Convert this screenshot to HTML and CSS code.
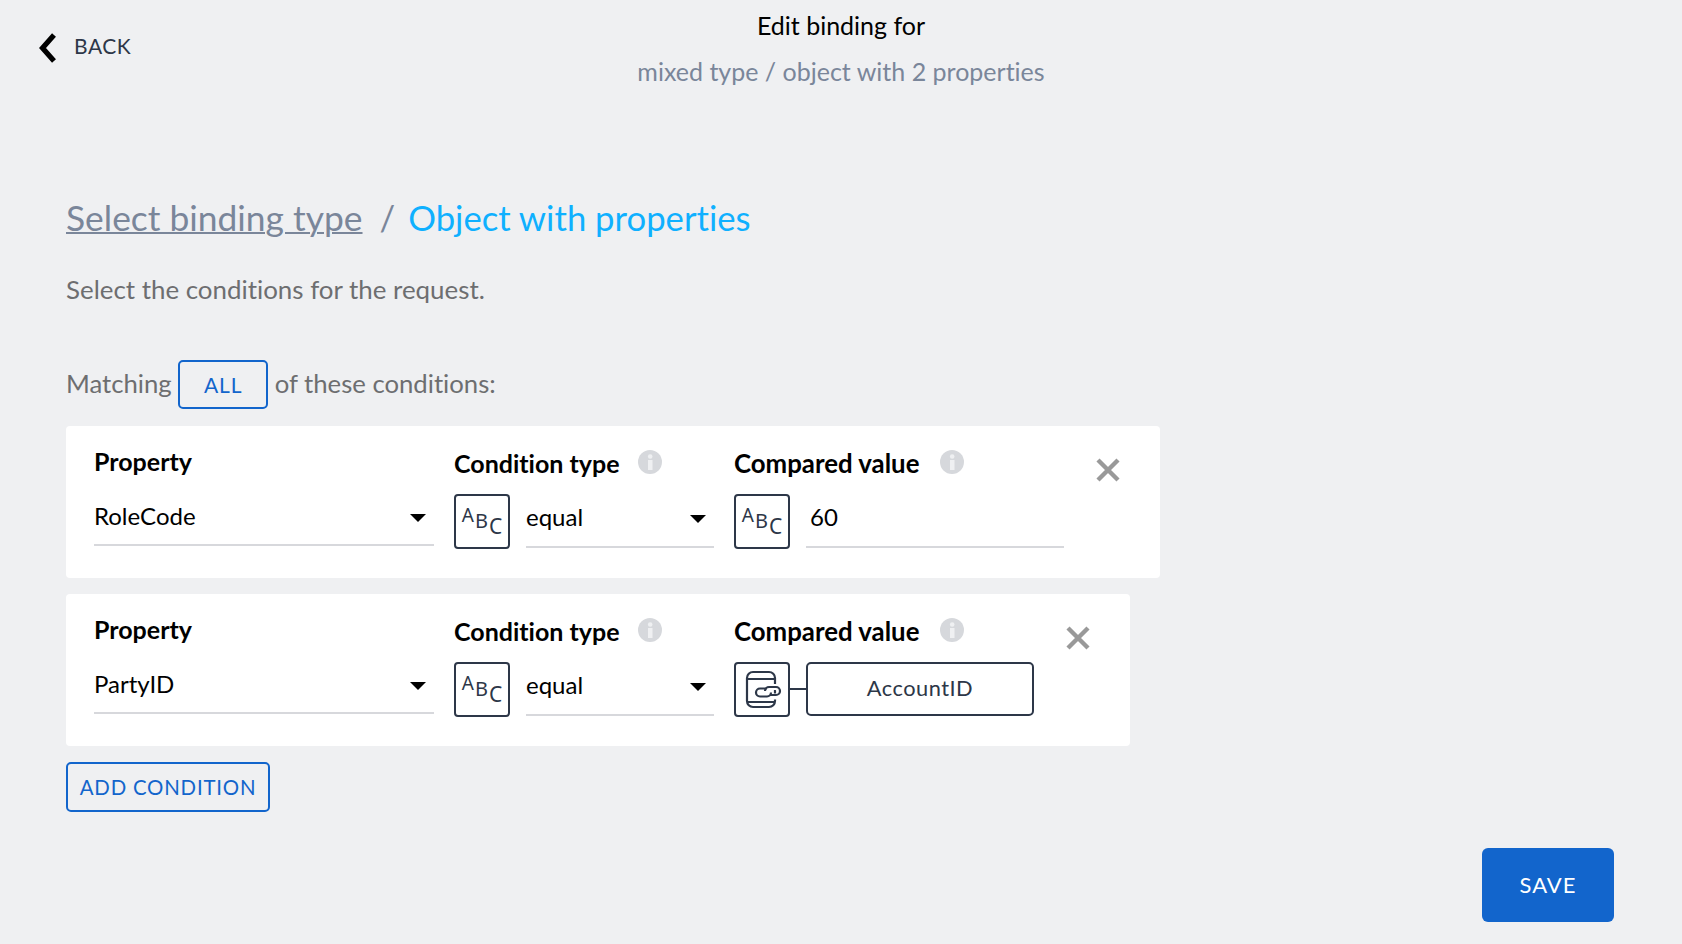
FILE: index.html
```html
<!DOCTYPE html>
<html lang="en">
<head>
<meta charset="utf-8">
<title>Edit binding</title>
<link rel="stylesheet" href="styles.css">
</head>
<body>
<div class="page">
  <header class="header">
    <a class="back">
      <svg class="back-icon" width="20" height="32" viewBox="0 0 20 32"><path d="M17 3 L5.5 16 L17 29" fill="none" stroke="#000" stroke-width="5.2"/></svg>
      <span class="back-text">BACK</span>
    </a>
    <div class="title">
      <div class="title-main">Edit binding for</div>
      <div class="title-sub">mixed type / object with 2 properties</div>
    </div>
  </header>
  <main class="content">
    <h1 class="crumbs"><a class="crumb-link">Select binding type</a><span class="crumb-sep">/</span><span class="crumb-current">Object with properties</span></h1>
    <p class="intro">Select the conditions for the request.</p>
    <div class="matching"><span class="matching-text">Matching</span><button class="btn-outline btn-all">ALL</button><span class="matching-text">of these conditions:</span></div>
    <div class="cards">
      <section class="card">
        <div class="col col-prop">
          <div class="label label-prop">Property</div>
          <div class="field field-prop"><span>RoleCode</span><i class="caret"></i></div>
        </div>
        <div class="col col-cond">
          <div class="label">Condition type<svg class="info" viewBox="0 0 24 24"><circle cx="12" cy="12" r="12" fill="#d6d8dc"/><rect x="10" y="10" width="4.5" height="10" fill="#eff0f2"/><circle cx="12.2" cy="6.5" r="2.3" fill="#eff0f2"/></svg></div>
          <div class="row">
            <div class="type-box"><span class="abc-a">A</span><span class="abc-b">B</span><span class="abc-c">C</span></div>
            <div class="field field-op"><span>equal</span><i class="caret"></i></div>
          </div>
        </div>
        <div class="col col-value">
          <div class="label">Compared value<svg class="info" viewBox="0 0 24 24"><circle cx="12" cy="12" r="12" fill="#d6d8dc"/><rect x="10" y="10" width="4.5" height="10" fill="#eff0f2"/><circle cx="12.2" cy="6.5" r="2.3" fill="#eff0f2"/></svg></div>
          <div class="row">
            <div class="type-box"><span class="abc-a">A</span><span class="abc-b">B</span><span class="abc-c">C</span></div>
            <div class="field field-val"><span>60</span></div>
          </div>
        </div>
        <svg class="close" viewBox="0 0 24 24"><path d="M2 2 L22 22 M22 2 L2 22" fill="none" stroke="#999" stroke-width="4.4"/></svg>
      </section>
      <section class="card">
        <div class="col col-prop">
          <div class="label label-prop">Property</div>
          <div class="field field-prop"><span>PartyID</span><i class="caret"></i></div>
        </div>
        <div class="col col-cond">
          <div class="label">Condition type<svg class="info" viewBox="0 0 24 24"><circle cx="12" cy="12" r="12" fill="#d6d8dc"/><rect x="10" y="10" width="4.5" height="10" fill="#eff0f2"/><circle cx="12.2" cy="6.5" r="2.3" fill="#eff0f2"/></svg></div>
          <div class="row">
            <div class="type-box"><span class="abc-a">A</span><span class="abc-b">B</span><span class="abc-c">C</span></div>
            <div class="field field-op"><span>equal</span><i class="caret"></i></div>
          </div>
        </div>
        <div class="col col-bound">
          <div class="label">Compared value<svg class="info" viewBox="0 0 24 24"><circle cx="12" cy="12" r="12" fill="#d6d8dc"/><rect x="10" y="10" width="4.5" height="10" fill="#eff0f2"/><circle cx="12.2" cy="6.5" r="2.3" fill="#eff0f2"/></svg></div>
          <div class="row row-bound">
            <div class="type-box">
              <svg width="52" height="51" viewBox="0 0 52 51" fill="none" stroke="#2d3748" stroke-width="2.2">
                <rect x="11" y="8" width="28" height="35" rx="6"/>
                <path d="M11 15 H39 M11 38 H39"/>
                <rect x="20" y="23" width="24" height="9.5" rx="4.5" stroke="#fff" stroke-width="6"/>
                <path d="M29 27 a4 4 0 0 1 4 -4 H40 a4 4 0 0 1 0 8 H34"/>
                <path d="M31 24.5 H24 a4 4 0 0 0 0 8 H31 a4 4 0 0 0 4 -4"/>
              </svg>
            </div>
            <div class="connector"></div>
            <div class="bound-value">AccountID</div>
          </div>
        </div>
        <svg class="close" viewBox="0 0 24 24"><path d="M2 2 L22 22 M22 2 L2 22" fill="none" stroke="#999" stroke-width="4.4"/></svg>
      </section>
      <button class="btn-outline btn-add">ADD CONDITION</button>
    </div>
    <div class="actions"><button class="btn-save">SAVE</button></div>
  </main>
</div>
</body>
</html>
```
FILE: styles.css
```css
* { box-sizing: border-box; }
html, body { margin: 0; height: 100%; }
body {
  background: #eff0f2;
  font-family: "Lato", "Open Sans", sans-serif;
  font-variant-ligatures: none;
  color: #000;
  overflow: hidden;
}
.page { height: 944px; }

.header {
  display: flex;
  justify-content: center;
  height: 95px;
  padding-top: 2px;
  position: relative;
}
.back {
  position: absolute;
  left: 37px;
  top: 32px;
  display: flex;
  align-items: center;
  gap: 17px;
  font-size: 21px;
  letter-spacing: 0.55px;
  color: #2d3748;
}
.back-text { margin-bottom: 5px; }
.title { text-align: center; }
.title-main { font-size: 25px; line-height: 46px; }
.title-sub { font-size: 25px; line-height: 46px; color: #7a869a; }

.content { padding: 0 68px 0 66px; }
.crumbs {
  margin: 98px 0 0;
  font-size: 34.7px;
  line-height: 50px;
  font-weight: 400;
  display: flex;
}
.crumb-link { font-size: 35.4px; color: #7a869a; text-decoration: underline; text-decoration-thickness: 2px; }
.crumb-sep { color: #7a869a; margin: 0 13px 0 17px; }
.crumb-current { color: #0fb0ff; }
.intro {
  margin: 31px 0 0;
  font-size: 25.9px;
  line-height: 30px;
  color: #6d6e70;
}
.matching {
  margin-top: 56px;
  height: 49px;
  display: flex;
  align-items: center;
  gap: 6.5px;
  font-size: 25.7px;
  color: #6d6e70;
}
.matching-text { margin-bottom: 3px; }
.btn-outline {
  background: transparent;
  border: 2px solid #1265cc;
  border-radius: 5px;
  color: #1265cc;
  font: inherit;
  font-size: 21px;
  letter-spacing: 0.8px;
  padding: 0;
}
.btn-all { width: 90px; height: 49px; }
.btn-add { width: 204px; height: 50px; font-size: 20.4px; }

.cards {
  margin-top: 17px;
  display: flex;
  flex-direction: column;
  align-items: flex-start;
  gap: 16px;
}
.card {
  background: #fff;
  border-radius: 4px;
  display: flex;
  align-items: flex-start;
  gap: 20px;
  padding: 20px 40px 29px 28px;
}
.col-prop { width: 340px; }
.col-cond { width: 260px; padding-top: 2px; }
.col-value { width: 330px; padding-top: 2px; }
.col-bound { width: 300px; padding-top: 2px; }

.label {
  display: flex;
  align-items: center;
  gap: 18px;
  font-size: 25px;
  line-height: 30px;
  font-weight: 700;
  height: 30px;
}
.col-value .label, .col-bound .label { font-size: 25.8px; gap: 21px; }
.info { width: 24px; height: 24px; margin-top: -2px; flex: none; }

.field {
  display: flex;
  justify-content: space-between;
  align-items: center;
  border-bottom: 2px solid #d7d8dc;
  font-size: 24px;
  line-height: 30px;
}
.field-prop { padding: 25px 8px 13px 0; }
.field-op { width: 188px; padding: 8px 8px 14px 0; }
.field-val { width: 258px; padding: 8px 8px 14px 4px; }
.caret {
  width: 0;
  height: 0;
  margin-top: 3px;
  border-left: 8px solid transparent;
  border-right: 8px solid transparent;
  border-top: 8px solid #000;
}

.row {
  margin-top: 16px;
  display: flex;
  align-items: flex-start;
  gap: 16px;
}
.row-bound { gap: 0; }
.type-box {
  width: 56px;
  height: 55px;
  border: 2px solid #2d3748;
  border-radius: 4px;
  background: #fff;
  display: flex;
  justify-content: center;
  font-family: "Noto Sans", sans-serif;
  color: #2d3748;
  line-height: 1;
}
.abc-a { font-size: 19px; margin-top: 10px; }
.abc-b { font-size: 20px; margin: 15px 0 0 1px; }
.abc-c { font-size: 21px; margin: 20px 0 0 1px; }
.connector { width: 16px; height: 2px; margin-top: 26px; background: #2d3748; }
.bound-value {
  width: 228px;
  height: 54px;
  padding-bottom: 3px;
  border: 2px solid #2d3748;
  border-radius: 5px;
  display: flex;
  align-items: center;
  justify-content: center;
  font-size: 21.8px;
  letter-spacing: 0.5px;
  color: #2d3748;
}
.close { width: 24px; height: 24px; margin: 12px 0 0 12px; flex: none; }

.actions { margin-top: 36px; display: flex; justify-content: flex-end; }
.btn-save {
  width: 132px;
  height: 74px;
  padding-bottom: 2px;
  background: #1265cc;
  border: 0;
  border-radius: 6px;
  color: #fff;
  font: inherit;
  font-size: 22px;
  letter-spacing: 1px;
}
```
